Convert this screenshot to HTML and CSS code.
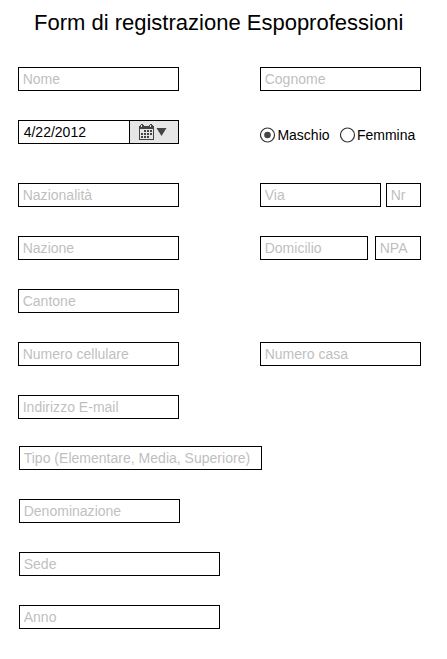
FILE: index.html
```html
<!DOCTYPE html>
<html lang="it">
<head>
<meta charset="utf-8">
<title>Form di registrazione Espoprofessioni</title>
<link rel="stylesheet" href="styles.css">
</head>
<body>
<main class="page">
  <h1 class="title">Form di registrazione Espoprofessioni</h1>
  <section class="rows">
    <div class="row"><div class="field">Nome</div><div class="field">Cognome</div></div>
    <div class="row row-birth">
      <div class="date">
        <span class="date-value">4/22/2012</span>
        <span class="date-button">
          <svg width="28" height="16" viewBox="0 0 28 16" shape-rendering="crispEdges">
            <path fill="#444" d="M2 0h2v1h1v1h5V1h1V0h2v1h1v1h1v14H0V2h1V1h1z"/>
            <path fill="#e6e6e6" d="M1 5h13v10H1zM2 1h1v2H2zM11 1h1v2h-1z"/>
            <path fill="#444" d="M5 6h2v2H5zM8 6h2v2H8zM11 6h2v2h-2zM2 9h2v2H2zM5 9h2v2H5zM8 9h2v2H8zM11 9h2v2h-2zM2 12h2v2H2zM5 12h2v2H5zM8 12h2v2H8z"/>
            <path fill="#444" shape-rendering="auto" d="M17.500 4h10l-5 8z"/>
          </svg>
        </span>
      </div>
      <div class="radios">
        <span class="radio"><svg width="16" height="16" viewBox="0 0 16 16"><circle cx="7.500" cy="8" r="7" fill="#fff" stroke="#333" stroke-width="1.200"/><circle cx="7.500" cy="8" r="3.300" fill="#444"/></svg>Maschio</span>
        <span class="radio"><svg width="16" height="16" viewBox="0 0 16 16"><circle cx="7.500" cy="8" r="7" fill="#fff" stroke="#333" stroke-width="1.200"/></svg>Femmina</span>
      </div>
    </div>
    <div class="row"><div class="field">Nazionalità</div><div class="pair"><div class="field via">Via</div><div class="field nr">Nr</div></div></div>
    <div class="row"><div class="field">Nazione</div><div class="pair"><div class="field city">Domicilio</div><div class="field npa">NPA</div></div></div>
    <div class="row"><div class="field">Cantone</div></div>
    <div class="row"><div class="field">Numero cellulare</div><div class="field">Numero casa</div></div>
    <div class="row"><div class="field">Indirizzo E-mail</div></div>
  </section>
  <section class="rows school">
    <div class="field type">Tipo (Elementare, Media, Superiore)</div>
    <div class="field">Denominazione</div>
    <div class="field wide">Sede</div>
    <div class="field wide">Anno</div>
  </section>
</main>
</body>
</html>
```
FILE: styles.css
```css
* { box-sizing: border-box; }
body {
  margin: 0;
  background: #fff;
  color: #000;
  font: 14px/22px "Liberation Sans", Arial, sans-serif;
}
.page { padding: 10px 0 0 18px; }
.title {
  margin: 0 0 31px 16px;
  font-size: 22px;
  line-height: 26px;
  font-weight: 400;
  white-space: nowrap;
}
.rows { display: flex; flex-direction: column; gap: 29px; }
.row {
  display: grid;
  grid-template-columns: 161px 161px;
  column-gap: 81px;
}
.row-birth { margin-bottom: 10px; }
.field {
  width: 161px;
  height: 24px;
  padding: 0 0 0 3.7px;
  border: 1px solid #000;
  color: #bfbfbf;
  letter-spacing: 0.015px;
  white-space: nowrap;
}
.pair { display: flex; justify-content: space-between; }
.via { width: 121px; }
.nr { width: 35px; }
.city { width: 108px; }
.npa { width: 46px; }
.date {
  display: flex;
  height: 24px;
  border: 1px solid #000;
}
.date-value { flex: 1; padding-left: 4.7px; }
.date-button {
  display: flex;
  align-items: center;
  width: 49px;
  padding-left: 9px;
  border-left: 1px solid #000;
  background: #e6e6e6;
}
.radios {
  display: flex;
  gap: 10px;
  height: 24px;
  padding-top: 4px;
}
.radio { display: flex; align-items: center; gap: 1.4px; height: 22px; }
.school { margin: 27px 0 0 1px; }
.type { width: 243px; }
.wide { width: 201px; }
```
